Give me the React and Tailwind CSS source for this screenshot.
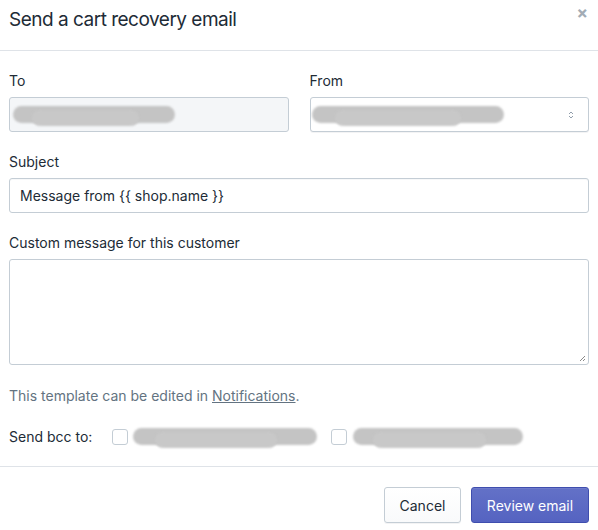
function Redacted({ w, className = '' }) {
  return (
    <div className={`relative h-[20px] ${className}`} style={{ width: w }}>
      <div className="absolute inset-x-0 top-[1px] h-[17px] rounded-full bg-[#c4c4c4] blur-[1px]" />
      <div className="absolute left-[12%] right-[22%] top-[5px] h-[16px] rounded-full bg-[#c8c8c8] blur-[1px]" />
    </div>
  )
}

export default function App() {
  return (
    <div className="h-[530px] w-[598px] overflow-hidden bg-white font-['Inter',sans-serif] text-[#212b36]">
      <div className="flex h-[51px] items-start justify-between border-b border-[#dfe3e8] pl-[9px] pr-[10px]">
        <h1 className="pt-[6px] text-[19px] leading-[28px] tracking-[-0.5px]">Send a cart recovery email</h1>
        <span className="pt-[3px] text-[17px] font-bold leading-[20px] text-[#a3acb5]">×</span>
      </div>

      <div className="px-[9px] pt-[20px] text-[14px]">
        <div className="grid grid-cols-2 gap-[21px]">
          <div>
            <div className="mb-[6px] leading-[20px]">To</div>
            <div className="flex h-[35px] items-center rounded-[3px] border border-[#c4cdd5] bg-[#f4f6f8] px-[3px]">
              <Redacted w={162} />
            </div>
          </div>
          <div>
            <div className="mb-[6px] leading-[20px]">From</div>
            <div className="flex h-[35px] items-center justify-between rounded-[3px] border border-[#c4cdd5] bg-white pl-[1px] pr-[14px] shadow-[0_1px_0_rgba(22,29,37,0.05)]">
              <Redacted w={192} />
              <svg width="6" height="10" viewBox="0 0 6 10" className="text-[#919eab]">
                <path d="M1 4 L3 2 L5 4" fill="none" stroke="currentColor" strokeWidth="1" />
                <path d="M1 6 L3 8 L5 6" fill="none" stroke="currentColor" strokeWidth="1" />
              </svg>
            </div>
          </div>
        </div>

        <div className="mt-[20px]">
          <div className="mb-[6px] leading-[20px]">Subject</div>
          <div className="flex h-[35px] items-center rounded-[3px] border border-[#c4cdd5] bg-white px-[10px] shadow-[inset_0_1px_0_rgba(99,115,129,0.05)]">
            Message from {'{{ shop.name }}'}
          </div>
        </div>

        <div className="mt-[20px]">
          <div className="mb-[6px] leading-[20px]">Custom message for this customer</div>
          <div className="relative h-[106px] rounded-[3px] border border-[#c4cdd5] bg-white">
            <svg width="8" height="8" viewBox="0 0 8 8" className="absolute bottom-[2px] right-[2px] text-[#8a8a8a]">
              <path d="M7 2 L2 7 M7 5 L5 7" stroke="currentColor" strokeWidth="1" />
            </svg>
          </div>
        </div>

        <p className="mt-[21px] leading-[20px] text-[#637381]">
          This template can be edited in <span className="underline">Notifications</span>.
        </p>

        <div className="mt-[21px] flex items-center leading-[20px]">
          <span className="w-[103px]">Send bcc to:</span>
          <span className="h-[16px] w-[16px] rounded-[3px] border border-[#c4cdd5] bg-white" />
          <Redacted w={184} className="ml-[5px]" />
          <span className="ml-[14px] h-[16px] w-[16px] rounded-[3px] border border-[#c4cdd5] bg-white" />
          <Redacted w={170} className="ml-[6px]" />
        </div>
      </div>

      <div className="mt-[19px] flex justify-end gap-[10px] border-t border-[#dfe3e8] px-[9px] pt-[20px] text-[14px]">
        <button className="h-[36px] w-[77px] rounded-[3px] border border-[#c4cdd5] bg-gradient-to-b from-white to-[#f9fafb] text-[#212b36] shadow-[0_1px_0_rgba(22,29,37,0.05)]">
          Cancel
        </button>
        <button className="h-[36px] w-[118px] rounded-[3px] border border-[#3f4eae] bg-gradient-to-b from-[#6371c7] to-[#5563c1] text-white shadow-[inset_0_1px_0_#6f7bcb]">
          Review email
        </button>
      </div>
    </div>
  )
}
